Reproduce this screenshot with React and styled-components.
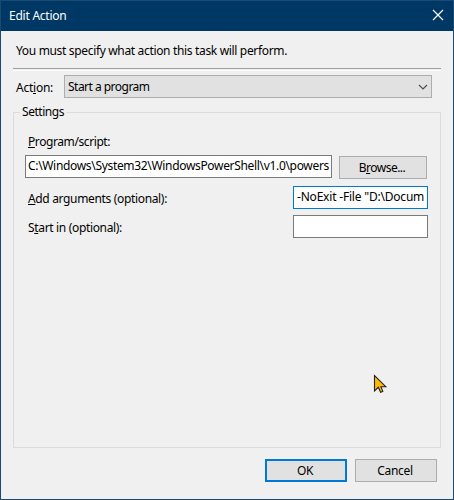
import React from "react";
import styled, { createGlobalStyle } from "styled-components";

const GlobalStyle = createGlobalStyle`
  * { box-sizing: border-box; }
  body { margin: 0; overflow: hidden; }
`;

const Dialog = styled.main`
  position: relative;
  display: flex;
  flex-direction: column;
  width: 454px;
  height: 500px;
  border: 1px solid #1a4a74;
  background: #f0f0f0;
  color: #000;
  font: 12px/16px "Noto Sans", "Open Sans", sans-serif;
`;

const TitleBar = styled.header`
  display: flex;
  align-items: flex-start;
  justify-content: space-between;
  flex: none;
  height: 30px;
  padding: 7px 9px 0 8px;
  background: #003865;
  color: #fff;
`;

const CloseIcon = styled.svg`
  width: 12px;
  height: 12px;
  margin-top: 1px;
`;

const Text = styled.span`
  display: block;
  flex: none;
  white-space: pre;
  letter-spacing: ${({ $track }) => $track}px;
`;

const Key = styled.span`
  text-decoration: underline;
  text-decoration-thickness: 1px;
  text-underline-offset: 1px;
  text-decoration-skip-ink: none;
`;

const Intro = styled.div`
  height: 37px;
  padding: 12px 0 0 15px;
`;

const Divider = styled.hr`
  flex: none;
  width: 428px;
  height: 3px;
  margin: 0 0 0 12px;
  border: 0;
  border-top: 1px solid #a0a0a0;
  background: linear-gradient(#f0f0f0 1px, #fff 1px);
`;

const ActionRow = styled.div`
  display: flex;
  height: 37px;
  padding: 4px 0 0 15px;
`;

const ActionLabel = styled.label`
  width: 48px;
  padding-top: 5px;
`;

const Select = styled.div`
  display: flex;
  justify-content: space-between;
  width: 368px;
  height: 23px;
  padding: 3px 3px 0;
  border: 1px solid #adadad;
  background: #e1e1e1;
`;

const Chevron = styled.svg`
  width: 10px;
  height: 6px;
  margin-top: 5px;
`;

const Group = styled.fieldset`
  display: flex;
  flex-direction: column;
  width: 428px;
  height: 344px;
  margin: -4px 0 0 12px;
  padding: 0 12px 0 11px;
  border: 1px solid #dcdcdc;
`;

const Legend = styled.legend`
  height: 16px;
  margin-left: -5px;
  padding: 0 2px;
`;

const Caption = styled.label`
  display: block;
  height: 21px;
  margin-top: 14px;
  padding-left: 3px;
`;

const ProgramRow = styled.div`
  display: flex;
  align-items: flex-start;
  gap: 7px;
  height: 31px;
`;

const FieldRow = styled.div`
  display: flex;
  align-items: flex-start;
  justify-content: space-between;
  height: 29px;
  padding-left: 3px;
`;

const FieldLabel = styled.label`
  padding-top: 5px;
`;

const Field = styled.div`
  width: ${({ $width }) => $width}px;
  height: 23px;
  padding: 2px 0 0 ${({ $indent }) => $indent || 2}px;
  overflow: hidden;
  border: 1px solid ${({ $focused }) => ($focused ? "#0078d7" : "#7a7a7a")};
  background: #fff;
`;

const Button = styled.button`
  display: flex;
  justify-content: center;
  width: ${({ $width }) => $width || 82}px;
  height: 23px;
  margin: ${({ $drop }) => $drop || 0}px 0 0;
  padding: ${({ $primary }) => ($primary ? 2 : 3)}px 2px 0 0;
  border: ${({ $primary }) => ($primary ? "2px solid #0078d7" : "1px solid #adadad")};
  background: #e1e1e1;
  color: inherit;
  font: inherit;
`;

const Footer = styled.footer`
  display: flex;
  justify-content: flex-end;
  gap: 8px;
  padding: 11px 16px 0 0;
`;

const Pointer = styled.svg`
  position: absolute;
  left: 372px;
  top: 372px;
  width: 15px;
  height: 20px;
`;

export default function App() {
  return (
    <Dialog>
      <GlobalStyle />
      <TitleBar>
        <Text $track={-0.24}>Edit Action</Text>
        <CloseIcon viewBox="0 0 12 12" fill="none" stroke="#fff" strokeWidth="1.2">
          <path d="M1 1l10 10M11 1L1 11" />
        </CloseIcon>
      </TitleBar>
      <Intro>
        <Text $track={-0.335}>You must specify what action this task will perform.</Text>
      </Intro>
      <Divider />
      <ActionRow>
        <ActionLabel>
          <Text $track={-0.24}>Act<Key>i</Key>on:</Text>
        </ActionLabel>
        <Select>
          <Text $track={-0.52}>Start a program</Text>
          <Chevron viewBox="0 0 10 6" fill="none" stroke="#505050" strokeWidth="1.2">
            <path d="M1 1l4 4l4-4" />
          </Chevron>
        </Select>
      </ActionRow>
      <Group>
        <Legend>
          <Text $track={-0.46}>Settings</Text>
        </Legend>
        <Caption>
          <Text $track={-0.41}><Key>P</Key>rogram/script:</Text>
        </Caption>
        <ProgramRow>
          <Field $width={307}>
            <Text $track={-0.325}>{"C:\\Windows\\System32\\WindowsPowerShell\\v1.0\\powers"}</Text>
          </Field>
          <Button $width={88} $drop={1}>
            <Text $track={-0.51}>B<Key>r</Key>owse...</Text>
          </Button>
        </ProgramRow>
        <FieldRow>
          <FieldLabel>
            <Text $track={-0.34}><Key>A</Key>dd arguments (optional):</Text>
          </FieldLabel>
          <Field $width={135} $indent={3} $focused>
            <Text $track={-0.2}>{'-NoExit -File "D:\\Docum'}</Text>
          </Field>
        </FieldRow>
        <FieldRow>
          <FieldLabel>
            <Text $track={-0.335}>S<Key>t</Key>art in (optional):</Text>
          </FieldLabel>
          <Field $width={135} />
        </FieldRow>
      </Group>
      <Footer>
        <Button $primary>
          <Text $track={-0.4}>OK</Text>
        </Button>
        <Button>
          <Text $track={-0.32}>Cancel</Text>
        </Button>
      </Footer>
      <Pointer viewBox="0 0 15 20">
        <path
          d="M1.5 2.5V18L5.3 14.3L7.6 19.2L9.8 18.4L7.9 13.7H12.8Z"
          fill="#ffb900"
          stroke="#222"
          strokeWidth="1.1"
        />
      </Pointer>
    </Dialog>
  );
}
